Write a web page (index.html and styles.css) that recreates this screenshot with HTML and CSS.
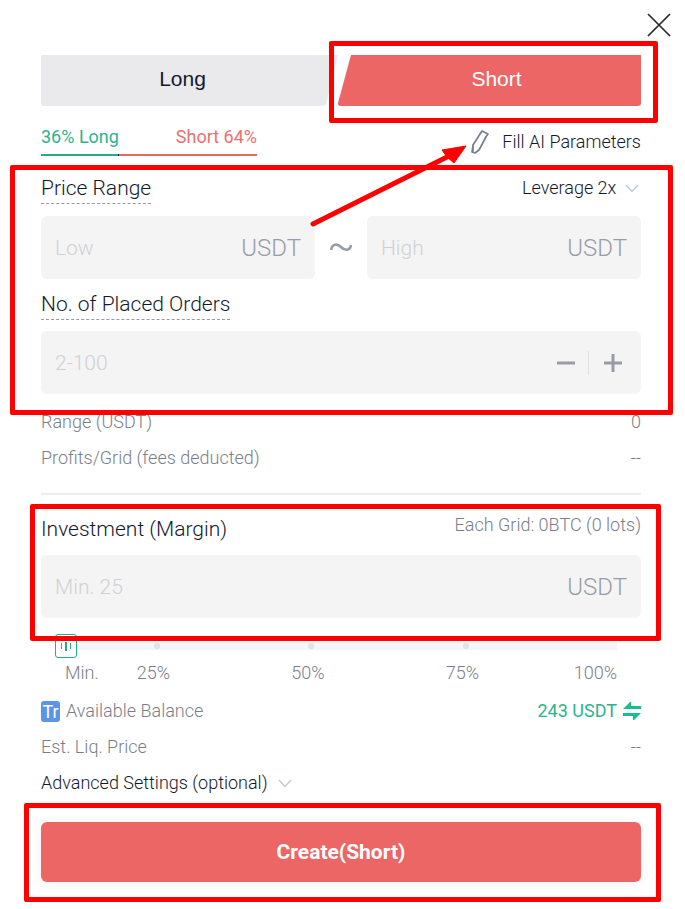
FILE: index.html
```html
<!DOCTYPE html>
<html lang="en">
<head>
<meta charset="utf-8">
<meta name="viewport" content="width=device-width, initial-scale=1">
<title>Futures Grid</title>
<link rel="stylesheet" href="styles.css">
</head>
<body>
<header class="header">
  <button class="close" type="button" aria-label="Close">
    <svg width="24" height="24" viewBox="0 0 24 24"><path d="M1 1L23 23M23 1L1 23" fill="none" stroke="#292a2e" stroke-width="1.7"/></svg>
  </button>
</header>
<main class="panel">
  <div class="tabs">
    <button class="tab" type="button">
      <svg class="tab-shape" viewBox="0 0 298 51" preserveAspectRatio="none"><path d="M0 0H298L287 46Q286 51 281 51H3Q0 51 0 48Z" fill="#eaeaec"/></svg>
      <span class="tab-text">Long</span>
    </button>
    <button class="tab tab-short" type="button">
      <svg class="tab-shape" viewBox="0 0 303 51" preserveAspectRatio="none"><path d="M13 0H303V48Q303 51 300 51H2Q0 51 0 48Z" fill="#ed6666"/></svg>
      <span class="tab-text">Short</span>
    </button>
    <span class="mark mark-short"></span>
  </div>

  <div class="summary">
    <div class="ratio">
      <div class="ratio-text"><span class="green">36% Long</span><span class="red">Short 64%</span></div>
      <div class="ratio-bar"><span class="ratio-long"></span><span class="ratio-split"></span><span class="ratio-short"></span></div>
    </div>
    <button class="ai" type="button">
      <svg width="20" height="26" viewBox="0 0 20 26"><path d="M15 9L18 5L12 2L3 16L2 23L5 24L9 21L16 8M3 16L3 23" fill="none" stroke="#75818f" stroke-width="1.7" stroke-linejoin="round"/></svg>
      <span>Fill AI Parameters</span>
    </button>
  </div>

  <section class="prices">
    <div class="row row-title">
      <span class="title hinted">Price Range</span>
      <span class="leverage">
        <select class="select" aria-label="Leverage"><option>Leverage 2x</option></select>
        <svg width="14" height="9" viewBox="0 0 14 9"><path d="M1 1L7 7.5L13 1" fill="none" stroke="#bdc9dc" stroke-width="1.4"/></svg>
      </span>
    </div>
    <div class="range">
      <label class="field"><input class="input" type="text" placeholder="Low" aria-label="Low price"><span class="unit">USDT</span></label>
      <svg class="tilde" width="22" height="10" viewBox="0 0 22 10"><path d="M1 7C2 1 7 0 11 4C15 8 20 8 21 2" fill="none" stroke="#999ca7" stroke-width="2.6"/></svg>
      <label class="field"><input class="input" type="text" placeholder="High" aria-label="High price"><span class="unit">USDT</span></label>
    </div>
    <label class="title hinted orders-title" for="orders">No. of Placed Orders</label>
    <div class="field">
      <input class="input" id="orders" type="text" placeholder="2-100">
      <button class="step" type="button" aria-label="Decrease"><svg width="18" height="18" viewBox="0 0 18 18"><path d="M0 9H18" stroke="#999ca7" stroke-width="3"/></svg></button>
      <span class="step-line"></span>
      <button class="step" type="button" aria-label="Increase"><svg width="18" height="18" viewBox="0 0 18 18"><path d="M0 9H18M9 0V18" stroke="#999ca7" stroke-width="3"/></svg></button>
    </div>
    <span class="mark mark-prices"></span>
    <svg class="arrow" width="164" height="86" viewBox="0 0 164 86"><path d="M10 82L146 14" stroke="#f00" stroke-width="5" stroke-linecap="round"/><path d="M163 4L139 8L144 15L151 21Z" fill="#f00" stroke="#f00"/></svg>
  </section>

  <div class="facts">
    <div class="row"><span>Range (USDT)</span><span>0</span></div>
    <div class="row"><span>Profits/Grid (fees deducted)</span><span>--</span></div>
  </div>

  <section class="invest">
    <div class="row row-title">
      <label class="title" for="margin">Investment (Margin)</label>
      <span class="each">Each Grid: 0BTC (0 lots)</span>
    </div>
    <div class="field">
      <input class="input" id="margin" type="text" placeholder="Min. 25">
      <span class="unit">USDT</span>
    </div>
    <span class="mark mark-invest"></span>
  </section>

  <div class="slider">
    <input class="slider-input" type="range" min="0" max="100" value="0" aria-label="Share of balance">
    <div class="scale"><span>Min.</span><span>25%</span><span>50%</span><span>75%</span><span>100%</span></div>
  </div>

  <div class="balances">
    <div class="row">
      <span class="available"><span class="badge">Tr</span>Available Balance</span>
      <span class="amount">243 USDT
        <svg width="18" height="18" viewBox="0 0 18 18"><path d="M0 7L7 0H8V4H18V7ZM18 11L11 18H10V14H0V11Z" fill="#1abc93"/></svg>
      </span>
    </div>
    <div class="row"><span>Est. Liq. Price</span><span>--</span></div>
    <button class="advanced" type="button">Advanced Settings (optional)
      <svg width="14" height="9" viewBox="0 0 14 9"><path d="M1 1L7 7.5L13 1" fill="none" stroke="#bdc9dc" stroke-width="1.4"/></svg>
    </button>
  </div>

  <div class="submit">
    <button class="create" type="button">Create(Short)</button>
    <span class="mark mark-create"></span>
  </div>
</main>
</body>
</html>
```
FILE: styles.css
```css
* {
  box-sizing: border-box;
}

body {
  margin: 0;
  background: #fff;
  color: #14182d;
  font-family: Roboto, "Liberation Sans", sans-serif;
  font-size: 18px;
  font-weight: 300;
  line-height: 24px;
}

button,
select,
input {
  margin: 0;
  padding: 0;
  border: 0;
  background: none;
  color: inherit;
  font: inherit;
}

svg {
  display: block;
  flex: none;
}

.header {
  display: flex;
  justify-content: flex-end;
  height: 55px;
  padding: 13px 14px 0;
}

.close {
  width: 24px;
  height: 24px;
}

.panel {
  padding: 0 44px 27px 41px;
}

.tabs {
  position: relative;
  display: flex;
}

.tab {
  display: grid;
  flex: 99;
  height: 51px;
  font-family: "Liberation Sans", sans-serif;
  font-size: 21px;
  font-weight: 400;
}

.tab-shape,
.tab-text {
  grid-area: 1 / 1;
}

.tab-shape {
  width: 100%;
  height: 51px;
}

.tab-text {
  align-self: center;
  justify-self: center;
  padding: 0 14px 4px 0;
}

.tab-short {
  flex: 101;
  color: #fff;
}

.tab-short .tab-text {
  padding: 0 0 4px 14px;
}

.mark {
  position: absolute;
  z-index: 2;
  border: 5px solid #f00;
  border-radius: 2px;
  pointer-events: none;
}

.mark-short {
  top: -14px;
  right: -17px;
  bottom: -17px;
  left: 48%;
}

.summary {
  display: flex;
  align-items: flex-start;
  justify-content: space-between;
  padding: 19px 0 14px;
}

.ratio {
  width: 216px;
}

.ratio-text {
  display: flex;
  justify-content: space-between;
  height: 29px;
}

.green {
  color: #2cb48e;
  font-weight: 400;
}

.red {
  color: #ed6f70;
  font-weight: 400;
}

.ratio-bar {
  display: flex;
  height: 2px;
}

.ratio-long {
  flex: 36;
  background: #27ac88;
}

.ratio-split {
  width: 1px;
  background: #14182d;
}

.ratio-short {
  flex: 64;
  background: #ed6666;
}

.ai {
  display: flex;
  align-items: center;
  gap: 12px;
  margin-top: 4px;
}

.prices,
.invest,
.submit {
  position: relative;
}

.prices {
  padding-top: 4px;
}

.row {
  display: flex;
  justify-content: space-between;
}

.title {
  font-size: 21px;
  line-height: 28px;
}

.hinted {
  height: 30px;
  border-bottom: 1px dashed #989ba4;
}

.leverage {
  display: flex;
  align-items: center;
  gap: 8px;
  height: 28px;
  padding-right: 2px;
}

.select {
  appearance: none;
}

.range {
  display: flex;
  align-items: center;
  margin: 12px 0 11px;
}

.field {
  display: flex;
  flex: 1;
  align-items: center;
  min-width: 0;
  height: 63px;
  padding: 0 14px;
  border-radius: 6px;
  background: #f4f4f4;
}

.input {
  flex: 1;
  width: 100%;
  min-width: 0;
  outline: 0;
  font-size: 21px;
}

.input::placeholder {
  color: #d0d1d6;
  opacity: 1;
}

.unit {
  color: #999ca7;
  font-size: 24px;
}

.tilde {
  margin: 0 15px;
}

.orders-title {
  display: table;
  margin-bottom: 11px;
}

.step {
  padding: 0 5px;
}

.step-line {
  width: 1px;
  height: 24px;
  margin: 0 10px 0 8px;
  background: #dfe0e3;
}

.mark-prices {
  top: -5px;
  right: -32px;
  bottom: -21px;
  left: -31px;
}

.arrow {
  position: absolute;
  z-index: 3;
  top: -28px;
  right: 174px;
  pointer-events: none;
}

.facts {
  display: grid;
  gap: 12px;
  padding: 16px 0 23px;
  border-bottom: 2px solid #eee;
  color: #7b7e8a;
}

.invest {
  padding-top: 20px;
}

.invest .title {
  height: 40px;
}

.each {
  color: #7b7e8a;
  line-height: 20px;
}

.mark-invest {
  top: 9px;
  right: -20px;
  bottom: -23px;
  left: -11px;
}

.slider {
  padding: 16px 24px 0 14px;
  color: #7b7e8a;
}

.slider-input {
  display: block;
  width: 100%;
  height: 24px;
  appearance: none;
  background:
    radial-gradient(circle, #e3e4e6 3px, transparent 3px) 17.7% 50% / 8px 8px no-repeat,
    radial-gradient(circle, #e3e4e6 3px, transparent 3px) 45.5% 50% / 8px 8px no-repeat,
    radial-gradient(circle, #e3e4e6 3px, transparent 3px) 73.5% 50% / 8px 8px no-repeat,
    linear-gradient(#f6f6f6, #f6f6f6) 50% 50% / 100% 8px no-repeat;
}

.slider-input::-webkit-slider-thumb {
  width: 22px;
  height: 24px;
  appearance: none;
  border: 1px solid #27ac88;
  border-radius: 3px;
  background:
    linear-gradient(#27ac88, #27ac88) 5px 50% / 1px 6px no-repeat,
    linear-gradient(#27ac88, #27ac88) 9px 50% / 2px 9px no-repeat,
    linear-gradient(#27ac88, #27ac88) 14px 50% / 1px 6px no-repeat,
    #fff;
}

.scale {
  display: grid;
  grid-template-columns: 1fr 14fr 14fr 14fr 7fr;
  margin: 3px 0 0 10px;
  text-align: center;
}

.scale span {
  min-width: 0;
}

.scale span:first-child {
  width: 0;
}

.scale span:last-child {
  text-align: right;
}

.balances {
  display: grid;
  gap: 12px;
  padding-top: 14px;
  color: #7b7e8a;
}

.available,
.amount {
  display: flex;
  align-items: center;
  gap: 6px;
}

.amount {
  color: #2cb48e;
  font-weight: 400;
}

.badge {
  width: 19px;
  height: 21px;
  border-radius: 3px;
  background: #5a96e8;
  color: #fff;
  font-weight: 400;
  line-height: 21px;
  text-align: center;
}

.advanced {
  display: flex;
  align-items: center;
  justify-self: start;
  gap: 10px;
  color: #14182d;
}

.submit {
  padding-top: 27px;
}

.create {
  display: block;
  width: 100%;
  height: 60px;
  border-radius: 6px;
  background: #ed6666;
  box-shadow: 0 2px 12px rgb(0 0 0 / 6%);
  color: #fff;
  font-size: 21px;
  font-weight: 700;
}

.mark-create {
  top: 8px;
  right: -20px;
  bottom: -20px;
  left: -17px;
}
```
